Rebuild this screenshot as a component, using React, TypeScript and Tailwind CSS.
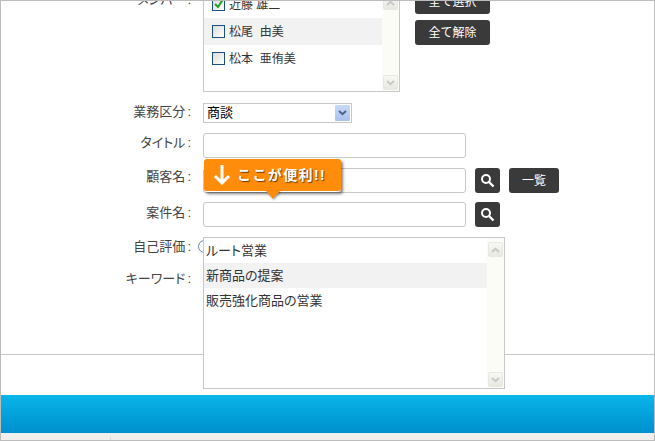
import React from "react";

const jp = "font-['Liberation_Sans','Noto_Sans_CJK_JP',sans-serif]";

function Chevron({ up, color }: { up?: boolean; color: string }) {
  return (
    <svg width="9" height="6" viewBox="0 0 9 6" fill="none" className={up ? "rotate-180" : ""}>
      <path d="M1 1l3.5 3.2L8 1" stroke={color} strokeWidth="2" />
    </svg>
  );
}

function ScrollBtn({ up }: { up?: boolean }) {
  return (
    <div className="w-[15px] h-[15px] flex items-center justify-center rounded-[2px] border border-[#e8e8e0] bg-gradient-to-b from-[#f8f8f4] to-[#e8e8e2]">
      <Chevron up={up} color="#c8c8c4" />
    </div>
  );
}

function Scrollbar() {
  return (
    <div className="w-[17px] shrink-0 bg-[#fcfcf7] flex flex-col items-center justify-between pt-[4px] pb-[1px]">
      <ScrollBtn up />
      <ScrollBtn />
    </div>
  );
}

function SearchIcon() {
  return (
    <button className="w-[25px] h-[25px] shrink-0 rounded-[3px] bg-[#3a3a3a] flex items-center justify-center">
      <svg width="15" height="15" viewBox="0 0 15 15" fill="none">
        <circle cx="6" cy="6" r="4" stroke="#fff" strokeWidth="2" />
        <path d="M9 9l4.5 4.5" stroke="#fff" strokeWidth="2.4" />
      </svg>
    </button>
  );
}

function DarkButton({ label, className }: { label: string; className: string }) {
  return (
    <button className={`rounded-[3px] bg-[#3a3a3a] text-white text-[12px] flex items-center justify-center ${className}`}>
      {label}
    </button>
  );
}

function Check({ checked }: { checked?: boolean }) {
  return (
    <span className="relative w-[13px] h-[13px] shrink-0 border border-[#1c5080] bg-gradient-to-br from-[#dcdcd8] to-white">
      {checked && (
        <svg width="13" height="13" viewBox="0 0 13 13" fill="none" className="absolute -left-px -top-px">
          <path d="M3 6l3 3 4.5-7" stroke="#21a121" strokeWidth="2" />
        </svg>
      )}
    </span>
  );
}

function Member({ name, on, checked }: { name: string; on?: boolean; checked?: boolean }) {
  return (
    <div className={`h-[27px] flex items-center gap-[4px] pl-[8px] text-[12px] text-[#333] ${on ? "bg-[#f2f2f2]" : ""}`}>
      <Check checked={checked} />
      <span className="whitespace-pre [font-feature-settings:'palt']">{name}</span>
    </div>
  );
}

function Row({
  label,
  children,
  className,
  labelClass = "",
}: {
  label: string;
  children: React.ReactNode;
  className: string;
  labelClass?: string;
}) {
  return (
    <div className={`flex items-center gap-[11px] ${className}`}>
      <div className={`w-[191px] shrink-0 text-right text-[13px] text-[#444] whitespace-nowrap [font-feature-settings:'palt'] pr-[1px] ${labelClass}`}>
        {label}
        <span className="ml-[2px]">:</span>
      </div>
      {children}
    </div>
  );
}

function TextBox() {
  return <div className="w-[263px] h-[25px] shrink-0 rounded-[3px] border border-[#c8c8c8] bg-white" />;
}

export default function App() {
  return (
    <div className={`w-[655px] h-[441px] overflow-hidden border border-[#bcbcbc] bg-white flex flex-col ${jp}`}>
      <div className="relative h-[354px] shrink-0 border-b border-[#c8c8c8]">
        <Row label="メンバー" className="-mt-[11px] !items-start">
          <div className="w-[197px] h-[102px] shrink-0 border border-[#c8c8c8] flex">
            <div className="flex-1 min-w-0">
              <Member name="近藤 雄二" checked />
              <Member name="松尾  由美" on />
              <Member name="松本  亜侑美" />
            </div>
            <Scrollbar />
          </div>
          <div className="ml-[4px] flex flex-col gap-[6px] -mt-[1px]">
            <DarkButton label="全て選択" className="w-[75px] h-[25px]" />
            <DarkButton label="全て解除" className="w-[75px] h-[25px]" />
          </div>
        </Row>

        <Row label="業務区分" className="mt-[11px]" labelClass="-mt-[2px]">
          <div className="w-[149px] h-[20px] border border-[#c8c8c8] flex items-center justify-between pl-[3px] pr-[1px] text-[13px] text-black">
            商談
            <span className="w-[15px] h-[16px] rounded-[1px] bg-gradient-to-b from-[#c9d9f7] to-[#a9c2ee] flex items-center justify-center">
              <Chevron color="#4a6288" />
            </span>
          </div>
        </Row>
        <Row label="タイトル" className="mt-[10px]" labelClass="-mt-[6px]">
          <TextBox />
        </Row>
        <Row label="顧客名" className="mt-[10px]" labelClass="-mt-[7px]">
          <TextBox />
          <div className="-ml-[2px] flex gap-[9px]">
            <SearchIcon />
            <DarkButton label="一覧" className="w-[50px] h-[25px]" />
          </div>
        </Row>
        <Row label="案件名" className="mt-[9px]" labelClass="-mt-[4px]">
          <TextBox />
          <div className="-ml-[2px]">
            <SearchIcon />
          </div>
        </Row>
        <Row label="自己評価" className="mt-[10px]">
          <span className="-ml-[5px] w-[13px] h-[13px] rounded-full border border-[#5b87b3]" />
        </Row>
        <Row label="キーワード" className="mt-[12px]">
          <span />
        </Row>

        {/* keyword dropdown */}
        <div className="absolute left-[202px] top-[236px] w-[302px] h-[152px] border border-[#c8c8c8] bg-white flex">
          <div className="flex-1 min-w-0 text-[13px] text-[#333] [font-feature-settings:'palt']">
            <div className="h-[25px] flex items-center pl-[2px]">ルート営業</div>
            <div className="h-[25px] flex items-center pl-[2px] bg-[#f2f2f2]">新商品の提案</div>
            <div className="h-[25px] flex items-center pl-[2px]">販売強化商品の営業</div>
          </div>
          <Scrollbar />
        </div>

        {/* tooltip */}
        <div className="absolute left-[203px] top-[158px] w-[137px] h-[33px] rounded-[3px] bg-[#ff8c0a] border-b border-white shadow-[2px_2px_3px_rgba(0,0,0,0.5)] flex items-center gap-[6px] pl-[9px]">
          <svg width="18" height="22" viewBox="0 0 18 22" fill="none">
            <path d="M9 1v18M2 12l7 7 7-7" stroke="#fff" strokeWidth="3" />
          </svg>
          <span className="text-white text-[14px] font-bold tracking-[1.4px] whitespace-nowrap [text-shadow:1px_1px_1px_rgba(0,0,0,0.6)]">
            ここが便利!!
          </span>
          <span className="absolute left-[62px] top-[32px] w-0 h-0 border-x-[7px] border-x-transparent border-t-[8px] border-t-[#ff8c0a] drop-shadow-[1px_1px_1px_rgba(0,0,0,0.35)]" />
        </div>
      </div>

      <div className="h-[40px] shrink-0" />
      <div className="h-[38px] shrink-0 bg-gradient-to-b from-[#0ab6e8] to-[#008fce]" />
      <div className="flex-1 bg-[#f0efeb] flex items-end">
        <span className="ml-[109px] w-px h-[3px] bg-[#dcdcdc]" />
      </div>
    </div>
  );
}
